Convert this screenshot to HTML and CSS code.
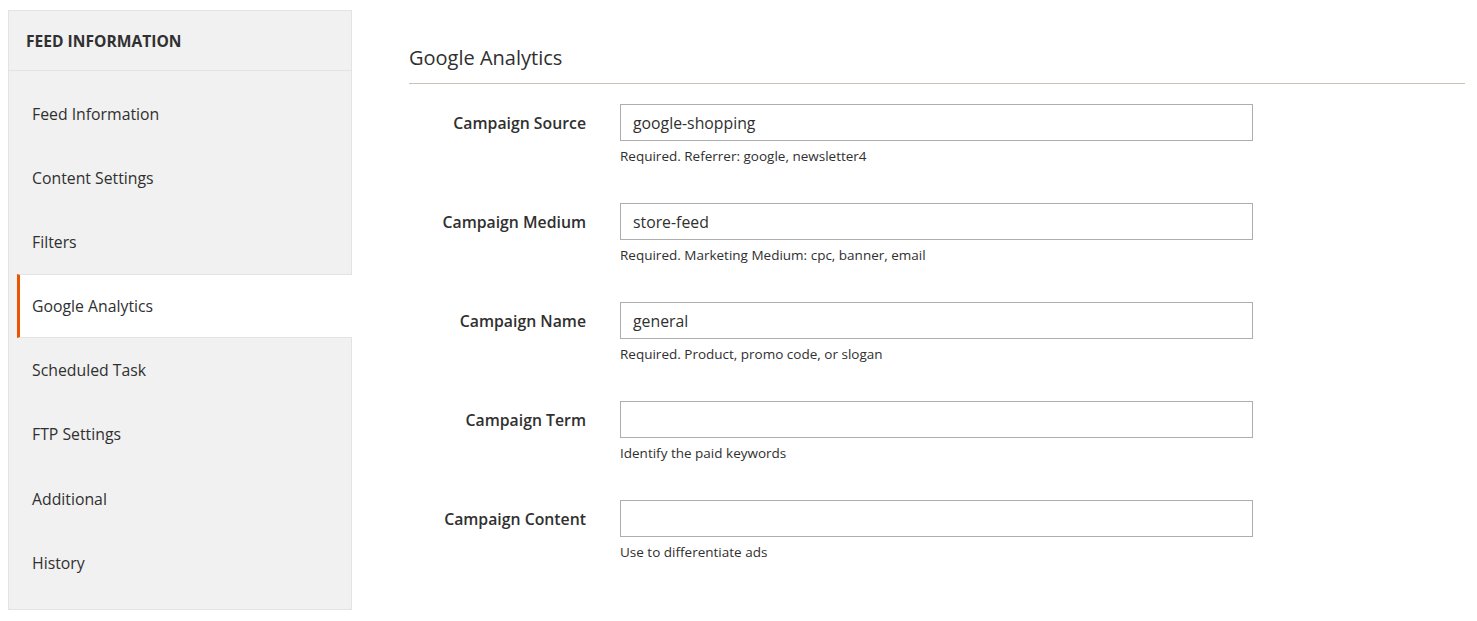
FILE: index.html
```html
<!DOCTYPE html>
<html lang="en">
<head>
	<meta charset="UTF-8">
	<title>Google Analytics</title>
	<link rel="stylesheet" href="styles.css">
</head>
<body>
	<div class="page">
		<div class="sideNav">
			<div class="sideTitle">Feed Information</div>
			<ul class="navList">
				<li>Feed Information</li>
				<li>Content Settings</li>
				<li>Filters</li>
				<li class="active">Google Analytics</li>
				<li>Scheduled Task</li>
				<li>FTP Settings</li>
				<li>Additional</li>
				<li>History</li>
			</ul>
		</div>
		<div class="main">
			<h2 class="legend">Google Analytics</h2>
			<div class="field">
				<label class="label">Campaign Source</label>
				<div class="control">
					<input class="input" type="text" value="google-shopping">
					<div class="note">Required. Referrer: google, newsletter4</div>
				</div>
			</div>
			<div class="field">
				<label class="label">Campaign Medium</label>
				<div class="control">
					<input class="input" type="text" value="store-feed">
					<div class="note">Required. Marketing Medium: cpc, banner, email</div>
				</div>
			</div>
			<div class="field">
				<label class="label">Campaign Name</label>
				<div class="control">
					<input class="input" type="text" value="general">
					<div class="note">Required. Product, promo code, or slogan</div>
				</div>
			</div>
			<div class="field">
				<label class="label">Campaign Term</label>
				<div class="control">
					<input class="input" type="text" value="">
					<div class="note">Identify the paid keywords</div>
				</div>
			</div>
			<div class="field">
				<label class="label">Campaign Content</label>
				<div class="control">
					<input class="input" type="text" value="">
					<div class="note">Use to differentiate ads</div>
				</div>
			</div>
		</div>
	</div>
</body>
</html>
```
FILE: styles.css
```css
*{
	margin: 0;
	padding: 0;
	box-sizing: border-box;
}
body{
	font-family: "Open Sans", "Liberation Sans", sans-serif;
	color: #303030;
	background: #fff;
}
ul{
	list-style: none;
}
.page{
	display: flex;
	padding: 10px 12px 0 8px;
}
/* left navigation */
.sideNav{
	width: 344px;
	height: 600px;
	flex-shrink: 0;
	background-color: #f1f1f1;
	border: 1px solid #e3e3e3;
}
.sideTitle{
	height: 60px;
	line-height: 60px;
	padding-left: 17px;
	border-bottom: 1px solid #e3e3e3;
	font-size: 15.6px;
	font-weight: 700;
	text-transform: uppercase;
}
.navList{
	padding: 11px 0 14px;
}
.navList>li{
	height: 64px;
	line-height: 62px;
	margin-left: 8px;
	margin-right: -1px;
	padding-left: 12px;
	border-left: 3px solid transparent;
	border-top: 1px solid transparent;
	border-bottom: 1px solid transparent;
	font-size: 15.8px;
}
.navList>li.active{
	background-color: #fff;
	border-left-color: #eb5202;
	border-top-color: #e3e3e3;
	border-bottom-color: #e3e3e3;
}
.navList>li:nth-child(n+7){
	padding-top: 1px;
}
/* content */
.main{
	flex: 1;
	margin-left: 57px;
	padding-top: 33px;
}
.legend{
	font-size: 20px;
	font-weight: 400;
	line-height: 30px;
	padding-bottom: 10px;
	border-bottom: 1px solid #cac3b4;
	margin-bottom: 20px;
}
.field{
	display: grid;
	grid-template-columns: 177px 633px;
	column-gap: 34px;
	margin-bottom: 39px;
}
.label{
	text-align: right;
	font-size: 15.8px;
	font-weight: 600;
	line-height: 37px;
	padding-top: 1px;
}
.input{
	display: block;
	width: 100%;
	height: 37px;
	border: 1px solid #adadad;
	padding: 0 12px;
	font-family: inherit;
	font-size: 15.8px;
	color: #303030;
	outline: none;
}
.note{
	margin-top: 7px;
	font-size: 13.5px;
	line-height: 16px;
}
```
